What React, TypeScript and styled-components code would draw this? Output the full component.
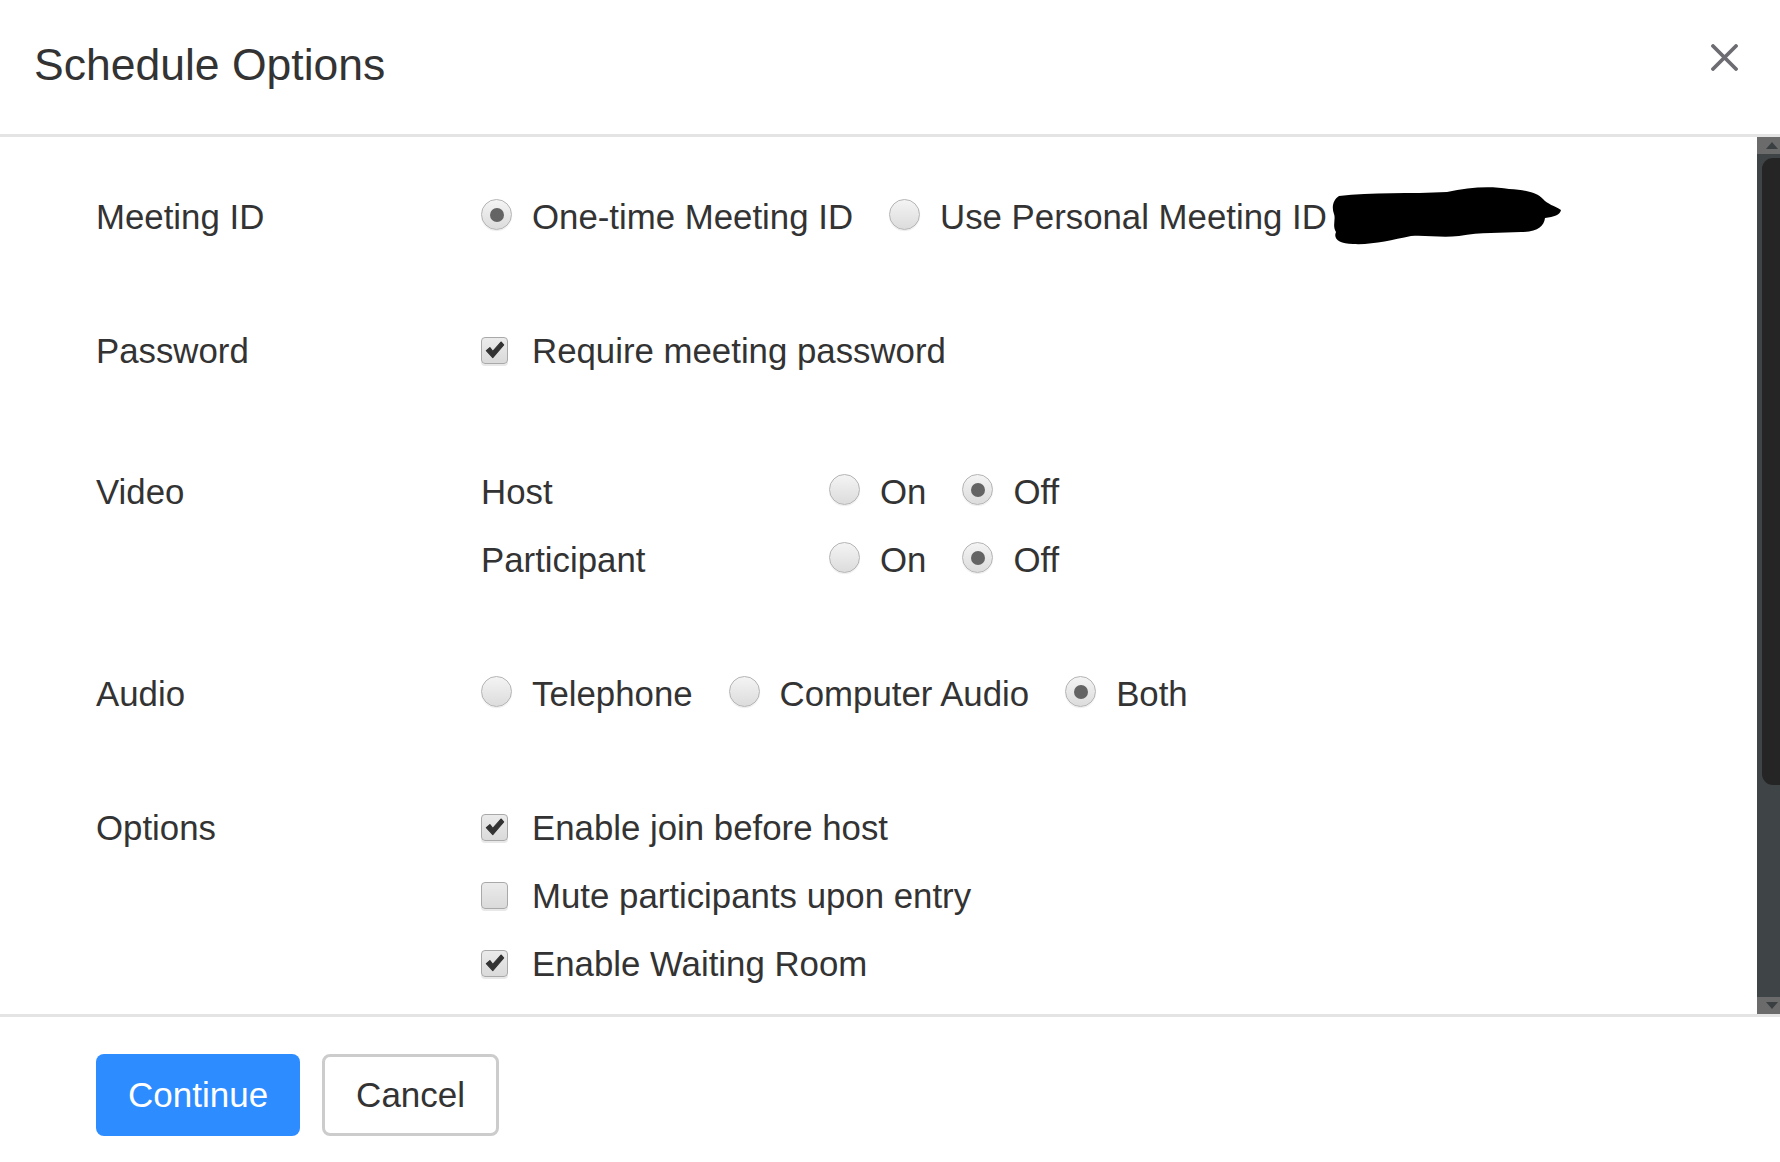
import { styled, createGlobalStyle } from "styled-components";

const GlobalStyle = createGlobalStyle`
  html, body {
    margin: 0;
    padding: 0;
    background: #fff;
    overflow: hidden;
  }
  body {
    font-family: "Liberation Sans", Arial, sans-serif;
    color: #333;
  }
`;

const Dialog = styled.div`
  display: flex;
  flex-direction: column;
  width: 1780px;
  height: 1162px;
  background: #fff;
`;

const Header = styled.div`
  display: flex;
  justify-content: space-between;
  align-items: flex-start;
  height: 134px;
  padding: 0 42px 0 34px;
  border-bottom: 3px solid #e4e4e4;
  flex-shrink: 0;
`;

const Title = styled.h1`
  margin: 43px 0 0;
  font-size: 44.5px;
  line-height: 44px;
  font-weight: 400;
  color: #333;
`;

const CloseButton = styled.button`
  margin-top: 44px;
  width: 27px;
  height: 27px;
  padding: 0;
  border: 0;
  background: transparent;
  cursor: pointer;
  display: flex;
`;

const Body = styled.div`
  flex: 1;
  display: flex;
  min-height: 0;
`;

const Content = styled.div`
  flex: 1;
  overflow: hidden;
  padding: 46px 0 0 96px;
  font-size: 34.8px;
`;

const Section = styled.div<{ $top?: number }>`
  display: grid;
  grid-template-columns: 385px 1fr;
  margin-top: ${(p) => p.$top ?? 66}px;

  &:first-child {
    margin-top: 0;
  }
`;

const Label = styled.div`
  line-height: 68px;
  height: 68px;
`;

const Lines = styled.div`
  display: flex;
  flex-direction: column;
`;

const Line = styled.div`
  display: flex;
  align-items: center;
  height: 68px;
  gap: 36px;
`;

const SubLabel = styled.div`
  width: 312px;
  line-height: 68px;
`;

const Choice = styled.label<{ $gap?: number }>`
  display: flex;
  align-items: center;
  gap: ${(p) => p.$gap ?? 20}px;
  cursor: pointer;
  white-space: nowrap;
`;

const RadioDot = styled.span<{ $on?: boolean }>`
  position: relative;
  box-sizing: border-box;
  width: 31px;
  height: 31px;
  margin-bottom: 5px;
  border-radius: 50%;
  border: 1px solid #b4b4b4;
  background: linear-gradient(#f4f4f4, #dcdcdc);
  box-shadow: 0 1px 1px rgba(0, 0, 0, 0.08);
  flex-shrink: 0;

  &::after {
    content: "";
    display: ${(p) => (p.$on ? "block" : "none")};
    position: absolute;
    left: 50%;
    top: 50%;
    width: 14px;
    height: 14px;
    margin: -7px 0 0 -7px;
    border-radius: 50%;
    background: #646464;
  }
`;

const CheckBox = styled.span`
  box-sizing: border-box;
  width: 27px;
  height: 27px;
  margin-bottom: 2px;
  border-radius: 4px;
  border: 1px solid #a9a9a9;
  background: linear-gradient(#ebebeb, #dadada);
  box-shadow: 0 2px 0 #e8e8e8;
  display: flex;
  align-items: center;
  justify-content: center;
  flex-shrink: 0;
`;

const Redacted = styled.svg`
  margin-left: -32px;
  margin-bottom: 2px;
  flex-shrink: 0;
`;

const Scrollbar = styled.div`
  width: 23px;
  display: flex;
  flex-direction: column;
  background: #3f4447;
  flex-shrink: 0;
`;

const ScrollArrow = styled.div`
  height: 17px;
  background: #6b6b6b;
  display: flex;
  align-items: center;
  justify-content: center;
  padding-left: 6px;
`;

const ScrollTrack = styled.div`
  flex: 1;
  padding: 4px 0 4px 5px;
  display: flex;
  flex-direction: column;
`;

const ScrollThumb = styled.div`
  height: 627px;
  background: #252525;
  border-radius: 11px 0 0 11px;
`;

const Footer = styled.div`
  box-sizing: border-box;
  flex-shrink: 0;
  height: 148px;
  border-top: 3px solid #e4e4e4;
  display: flex;
  align-items: flex-start;
  gap: 22px;
  padding: 37px 0 0 96px;
`;

const Button = styled.button<{ $primary?: boolean }>`
  box-sizing: border-box;
  height: 82px;
  padding: 0 ${(p) => (p.$primary ? 32 : 31)}px;
  border-radius: 8px;
  font-family: "Liberation Sans", Arial, sans-serif;
  font-size: 35px;
  cursor: pointer;
  border: ${(p) => (p.$primary ? "0" : "3px solid #cccccc")};
  background: ${(p) => (p.$primary ? "#2d8cff" : "#fff")};
  color: ${(p) => (p.$primary ? "#fff" : "#333")};
`;

function Radio({ on, children }: { on?: boolean; children: React.ReactNode }) {
  return (
    <Choice>
      <RadioDot $on={on} />
      <span>{children}</span>
    </Choice>
  );
}

function Check({ on, children }: { on?: boolean; children: React.ReactNode }) {
  return (
    <Choice $gap={24}>
      <CheckBox>
        {on && (
          <svg width="20" height="18" viewBox="0 0 18 16">
            <path
              d="M1.2 8.6 L4.4 5.8 L7 9.3 L14.4 0.8 L16.8 3.4 L7 14.8 Z"
              fill="#333"
              stroke="#333"
              strokeWidth="1"
              strokeLinejoin="round"
            />
          </svg>
        )}
      </CheckBox>
      <span>{children}</span>
    </Choice>
  );
}

export default function App() {
  return (
    <>
      <GlobalStyle />
      <Dialog>
        <Header>
          <Title>Schedule Options</Title>
          <CloseButton aria-label="Close">
            <svg width="27" height="27" viewBox="0 0 27 27">
              <path
                d="M2 2 L25 25 M25 2 L2 25"
                stroke="#6c6c72"
                strokeWidth="3.8"
                strokeLinecap="round"
              />
            </svg>
          </CloseButton>
        </Header>

        <Body>
          <Content>
            <Section>
              <Label>Meeting ID</Label>
              <Lines>
                <Line>
                  <Radio on>One-time Meeting ID</Radio>
                  <Radio>Use Personal Meeting ID</Radio>
                  <Redacted width="232" height="60" viewBox="0 0 232 60">
                    <path
                      d="M8 10 C40 6 80 8 116 6 C138 1 160 0 178 3 C196 4 206 7 212 13 C216 18 224 20 230 24 C229 29 223 31 214 32 C213 40 207 46 190 46 C170 47 150 46 128 50 C110 52 96 49 80 50 C60 54 42 59 22 58 C8 58 2 53 5 46 C1 40 5 33 3 28 C0 20 3 13 8 10 Z"
                      fill="#000"
                    />
                  </Redacted>
                </Line>
              </Lines>
            </Section>

            <Section>
              <Label>Password</Label>
              <Lines>
                <Line>
                  <Check on>Require meeting password</Check>
                </Line>
              </Lines>
            </Section>

            <Section $top={73}>
              <Label>Video</Label>
              <Lines>
                <Line>
                  <SubLabel>Host</SubLabel>
                  <Radio>On</Radio>
                  <Radio on>Off</Radio>
                </Line>
                <Line>
                  <SubLabel>Participant</SubLabel>
                  <Radio>On</Radio>
                  <Radio on>Off</Radio>
                </Line>
              </Lines>
            </Section>

            <Section>
              <Label>Audio</Label>
              <Lines>
                <Line>
                  <Radio>Telephone</Radio>
                  <Radio>Computer Audio</Radio>
                  <Radio on>Both</Radio>
                </Line>
              </Lines>
            </Section>

            <Section>
              <Label>Options</Label>
              <Lines>
                <Line>
                  <Check on>Enable join before host</Check>
                </Line>
                <Line>
                  <Check>Mute participants upon entry</Check>
                </Line>
                <Line>
                  <Check on>Enable Waiting Room</Check>
                </Line>
              </Lines>
            </Section>
          </Content>

          <Scrollbar>
            <ScrollArrow>
              <svg width="12" height="7" viewBox="0 0 12 7">
                <path d="M0 7 L6 0 L12 7 Z" fill="#3a3f42" />
              </svg>
            </ScrollArrow>
            <ScrollTrack>
              <ScrollThumb />
            </ScrollTrack>
            <ScrollArrow>
              <svg width="12" height="7" viewBox="0 0 12 7">
                <path d="M0 0 L6 7 L12 0 Z" fill="#3a3f42" />
              </svg>
            </ScrollArrow>
          </Scrollbar>
        </Body>

        <Footer>
          <Button $primary>Continue</Button>
          <Button>Cancel</Button>
        </Footer>
      </Dialog>
    </>
  );
}
